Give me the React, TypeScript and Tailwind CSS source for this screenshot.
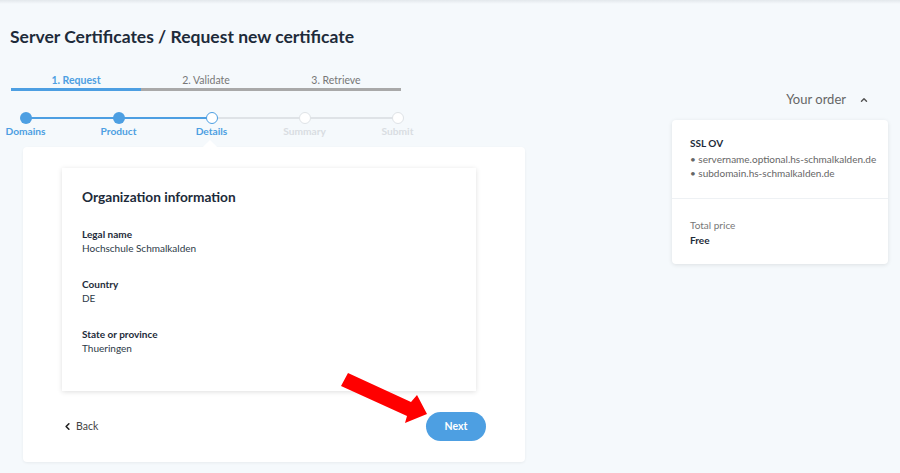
import { ChevronLeft, ChevronUp } from 'lucide-react'

const steps = [
  { label: 'Domains', state: 'done' },
  { label: 'Product', state: 'done' },
  { label: 'Details', state: 'current' },
  { label: 'Summary', state: 'todo' },
  { label: 'Submit', state: 'todo' },
]

const fields = [
  { label: 'Legal name', value: 'Hochschule Schmalkalden' },
  { label: 'Country', value: 'DE' },
  { label: 'State or province', value: 'Thueringen' },
]

export default function App() {
  return (
    <div className="relative w-[900px] h-[473px] overflow-hidden bg-[#f5f9fc] font-['Lato','Liberation_Sans',sans-serif] text-[#1d2b3a]">
      {/* top bar shadow */}
      <div className="absolute top-0 left-0 right-0 h-[4px] bg-gradient-to-b from-[#e3e8ec] to-[#f5f9fc]" />

      <div className="flex">
        {/* left column */}
        <div className="w-[672px] pt-[25px]">
          <h1 className="pl-[10px] text-[17.5px] leading-[24px] font-bold text-[#1d2b3a]">
            Server Certificates / Request new certificate
          </h1>

          {/* phase tabs */}
          <div className="ml-[11px] mt-[24px] w-[390px] grid grid-cols-3">
            <div className="flex flex-col items-center">
              <span className="text-[10.5px] leading-[14px] font-bold text-[#4d9fe2]">1. Request</span>
              <div className="mt-[1px] h-[3px] w-full bg-[#4d9fe2]" />
            </div>
            <div className="flex flex-col items-center">
              <span className="text-[10.5px] leading-[14px] text-[#777]">2. Validate</span>
              <div className="mt-[1px] h-[3px] w-full bg-[#a9a9a9]" />
            </div>
            <div className="flex flex-col items-center">
              <span className="text-[10.5px] leading-[14px] text-[#777]">3. Retrieve</span>
              <div className="mt-[1px] h-[3px] w-full bg-[#a9a9a9]" />
            </div>
          </div>

          {/* stepper */}
          <div className="ml-[-21px] mt-[21px] flex">
            {steps.map((s, i) => (
              <div key={s.label} className="relative w-[93px] flex flex-col items-center">
                {i < steps.length - 1 && (
                  <div
                    className={
                      'absolute top-[5px] left-[46px] w-[93px] h-[2px] ' +
                      (i < 2 ? 'bg-[#4d9fe2]' : 'bg-[#dfe3e7]')
                    }
                  />
                )}
                <div
                  className={
                    'relative z-10 w-[12px] h-[12px] rounded-full ' +
                    (s.state === 'done'
                      ? 'bg-[#4d9fe2]'
                      : s.state === 'current'
                        ? 'bg-white border-[1.5px] border-[#4d9fe2]'
                        : 'bg-white border-[1.5px] border-[#dfe3e7]')
                  }
                />
                <span
                  className={
                    'mt-[1px] text-[10.2px] leading-[13px] font-bold ' +
                    (s.state === 'todo' ? 'text-[#d9dde2]' : 'text-[#4d9fe2]')
                  }
                >
                  {s.label}
                </span>
              </div>
            ))}
          </div>

          {/* main card */}
          <div className="relative ml-[23px] mt-[9px] w-[502px] h-[315px] bg-white rounded-[4px] shadow-[0_1px_3px_rgba(0,0,0,0.06)] pt-[21px] pl-[39px]">
            <div className="absolute top-[-5px] left-[182px] w-[10px] h-[10px] bg-white rotate-45" />

            <div className="w-[414px] h-[223px] bg-white shadow-[0_1px_5px_rgba(0,0,0,0.13)] pt-[20px] pl-[20px]">
              <h2 className="text-[13.7px] leading-[18px] font-bold text-[#1d2b3a]">Organization information</h2>
              <div className="mt-[22px] flex flex-col gap-[23px]">
                {fields.map(f => (
                  <div key={f.label} className="flex flex-col">
                    <span className="text-[10px] leading-[13px] font-bold text-[#1d2b3a]">{f.label}</span>
                    <span className="text-[10px] leading-[14px] text-[#2c3a48]">{f.value}</span>
                  </div>
                ))}
              </div>
            </div>

            <div className="mt-[21px] w-[424px] flex items-center justify-between">
              <button className="flex items-center gap-[3px] text-[10.5px] text-[#444]">
                <ChevronLeft className="w-[11px] h-[11px]" strokeWidth={3.5} color="#222" />
                Back
              </button>
              <button className="w-[60px] h-[29px] rounded-full bg-[#4d9fe2] text-white text-[10.5px] font-bold">
                Next
              </button>
            </div>
          </div>
        </div>

        {/* right column */}
        <div className="w-[216px] pt-[91px]">
          <div className="flex items-center justify-end gap-[13px] pr-[19px] h-[18px]">
            <span className="text-[13px] text-[#666]">Your order</span>
            <ChevronUp className="w-[10px] h-[10px]" strokeWidth={3.5} color="#555" />
          </div>
          <div className="mt-[11px] bg-white rounded-[4px] shadow-[0_1px_4px_rgba(0,0,0,0.1)]">
            <div className="pt-[16px] pb-[18px] pl-[18px] border-b border-[#eef1f4]">
              <div className="text-[10px] leading-[14px] font-bold text-[#1d2b3a]">SSL OV</div>
              <div className="mt-[2px] text-[10px] leading-[14px] text-[#666]">• servername.optional.hs-schmalkalden.de</div>
              <div className="text-[10px] leading-[14px] text-[#666]">• subdomain.hs-schmalkalden.de</div>
            </div>
            <div className="pt-[19px] pb-[17px] pl-[18px]">
              <div className="text-[10px] leading-[14px] text-[#777]">Total price</div>
              <div className="mt-[1px] text-[10px] leading-[14px] font-bold text-[#1d2b3a]">Free</div>
            </div>
          </div>
        </div>
      </div>

      {/* red annotation arrow */}
      <svg className="absolute left-0 top-0 pointer-events-none" width="900" height="473">
        <polygon
          points="341,386 348,373 411,402 417,395 427,414 405,423 407,416"
          fill="#ff0000"
        />
      </svg>
    </div>
  )
}
